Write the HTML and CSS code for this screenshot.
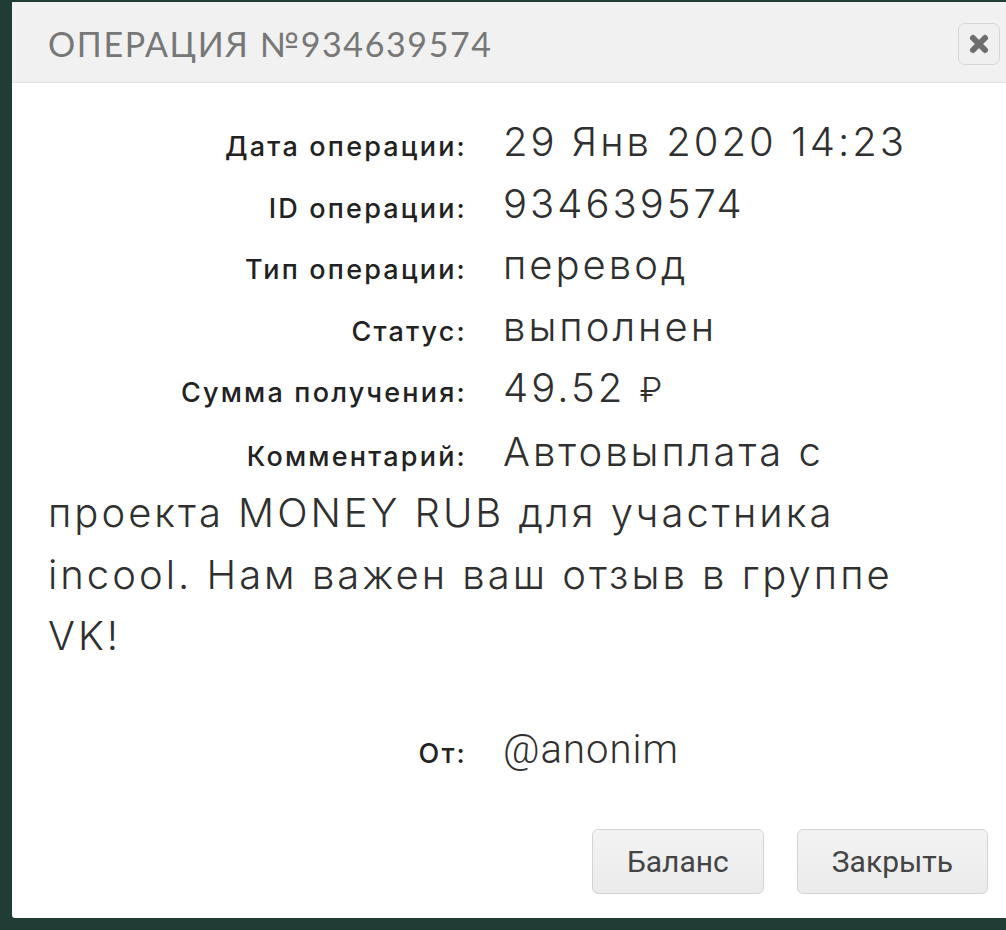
FILE: index.html
```html
<!DOCTYPE html>
<html lang="ru">
<head>
<meta charset="utf-8">
<title>Операция №934639574</title>
<link rel="stylesheet" href="styles.css">
</head>
<body>
<div class="dialog">
  <div class="dialog-header">
    <h1 class="dialog-title">ОПЕРАЦИЯ №934639574</h1>
    <button class="close-btn" aria-label="Закрыть">
      <svg width="24" height="24" viewBox="0 0 24 24"><path d="M6 6 L18 18 M18 6 L6 18" stroke="#6e6e6e" stroke-width="6" stroke-linecap="round"/></svg>
    </button>
  </div>
  <div class="dialog-body">
    <div class="row"><span class="label">Дата операции:</span><span class="value">29 Янв 2020 14:23</span></div>
    <div class="row"><span class="label">ID операции:</span><span class="value">934639574</span></div>
    <div class="row"><span class="label">Тип операции:</span><span class="value">перевод</span></div>
    <div class="row"><span class="label">Статус:</span><span class="value">выполнен</span></div>
    <div class="row"><span class="label">Сумма получения:</span><span class="value">49.52 <span class="rub">₽</span></span></div>
    <div class="row"><span class="label">Комментарий:</span><span class="value">Автовыплата с проекта MONEY RUB для участника incool. Нам важен ваш отзыв в группе VK!</span></div>
    <div class="row row-from"><span class="label">От:</span><span class="value value-from">@anonim</span></div>
  </div>
  <div class="dialog-footer">
    <button class="btn">Баланс</button>
    <button class="btn">Закрыть</button>
  </div>
</div>
</body>
</html>
```
FILE: styles.css
```css
html, body {
  margin: 0;
  padding: 0;
}
body {
  background: #1f3c35;
  height: 930px;
  overflow: hidden;
  padding-top: 2px;
  box-sizing: border-box;
}
.dialog {
  margin-left: 12px;
  height: 916px;
  background: #fff;
  border-radius: 3px 0 0 3px;
  display: flex;
  flex-direction: column;
}
.dialog-header {
  height: 80px;
  flex-shrink: 0;
  background: #f1f1f1;
  border-bottom: 1px solid #e3e3e3;
  display: flex;
  align-items: center;
  justify-content: space-between;
  padding: 0 6px 0 36px;
}
.dialog-title {
  margin: 0;
  font-family: "Lato", "Liberation Sans", sans-serif;
  font-weight: 400;
  font-size: 34px;
  letter-spacing: 1.6px;
  color: #777;
  padding-top: 2px;
}
.close-btn {
  width: 42px;
  height: 42px;
  margin-top: 4px;
  border: 1px solid #d6d6d6;
  border-radius: 7px;
  background: #f0f0f0;
  display: flex;
  align-items: center;
  justify-content: center;
  padding: 0;
}
.dialog-body {
  padding: 28px 56px 0 36px;
}
.row {
  font-family: "Inter", "Liberation Sans", sans-serif;
  font-weight: 300;
  font-size: 40px;
  line-height: 61.5px;
  color: #303030;
}
.label {
  display: inline-block;
  width: 419px;
  margin-right: 36px;
  text-align: right;
  font-weight: 500;
  font-size: 27px;
  line-height: 30px;
  letter-spacing: 2.2px;
  color: #222;
}
.value {
  letter-spacing: 3px;
}
.rub {
  font-size: 34px;
}
.row-from {
  margin-top: 51px;
}
.value-from {
  font-family: "Roboto", "Liberation Sans", sans-serif;
  font-weight: 300;
  letter-spacing: 1px;
}
.dialog-footer {
  margin-top: auto;
  display: flex;
  justify-content: flex-end;
  gap: 33px;
  padding: 0 18px 24px 0;
}
.btn {
  height: 65px;
  padding: 0 34px;
  font-family: "Roboto", "Liberation Sans", sans-serif;
  font-size: 30px;
  color: #444;
  background: linear-gradient(#f3f3f3, #ebebeb);
  border: 1px solid #d4d4d4;
  border-radius: 6px;
}
```
